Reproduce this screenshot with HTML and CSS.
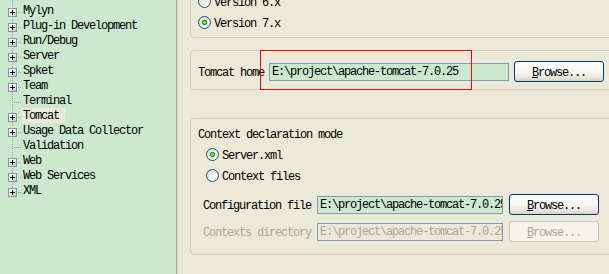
FILE: index.html
```html
<!DOCTYPE html>
<html lang="en">
<head>
    <meta charset="UTF-8">
    <title>Preferences - Tomcat</title>
    <link rel="stylesheet" href="styles.css">
</head>
<body>
    <div class="window">
        <!-- arvore de preferencias -->
        <div class="tree-pane">
            <ul class="tree">
                <li><span class="exp"></span><span class="label">Mylyn</span></li>
                <li><span class="exp"></span><span class="label">Plug-in Development</span></li>
                <li><span class="exp"></span><span class="label">Run/Debug</span></li>
                <li><span class="exp"></span><span class="label">Server</span></li>
                <li><span class="exp"></span><span class="label">Spket</span></li>
                <li><span class="exp"></span><span class="label">Team</span></li>
                <li><span class="exp none"></span><span class="label">Terminal</span></li>
                <li><span class="exp"></span><span class="label selected">Tomcat</span></li>
                <li><span class="exp"></span><span class="label">Usage Data Collector</span></li>
                <li><span class="exp none"></span><span class="label">Validation</span></li>
                <li><span class="exp"></span><span class="label">Web</span></li>
                <li><span class="exp"></span><span class="label">Web Services</span></li>
                <li><span class="exp"></span><span class="label">XML</span></li>
            </ul>
        </div>

        <!-- pagina Tomcat -->
        <div class="prefs">
            <div class="group group-version">
                <div class="radio-row"><span class="radio"></span><span class="caption">Version 6.x</span></div>
                <div class="radio-row"><span class="radio checked"></span><span class="caption">Version 7.x</span></div>
            </div>

            <div class="group group-home">
                <div class="field-row">
                    <span class="field-label home-label">Tomcat home</span>
                    <span class="text-input home-input">E:\project\apache-tomcat-7.0.25</span>
                    <span class="button home-button"><u>B</u>rowse...</span>
                </div>
            </div>

            <div class="group group-context">
                <div class="group-title">Context declaration mode</div>
                <div class="radio-row indent"><span class="radio checked"></span><span class="caption">Server.xml</span></div>
                <div class="radio-row indent"><span class="radio"></span><span class="caption">Context files</span></div>

                <div class="field-row config-row">
                    <span class="field-label ctx-label">Configuration file</span>
                    <span class="text-input ctx-input">E:\project\apache-tomcat-7.0.25</span>
                    <span class="button ctx-button"><u>B</u>rowse...</span>
                </div>
                <div class="field-row dir-row disabled">
                    <span class="field-label ctx-label">Contexts directory</span>
                    <span class="text-input ctx-input">E:\project\apache-tomcat-7.0.25</span>
                    <span class="button ctx-button"><u>B</u>rowse...</span>
                </div>
            </div>
        </div>

        <div class="annotation"></div>
    </div>
</body>
</html>
```

FILE: styles.css
```css
body {
    margin: 0;
    font-family: "Liberation Mono", "Courier New", monospace;
    font-size: 12px;
    letter-spacing: -1.2px;
    color: #000;
    background-color: #ece9d8;
}

.window {
    position: relative;
    display: flex;
    height: 274px;
    overflow: hidden;
}

/* arvore */
.tree-pane {
    width: 176px;
    flex: none;
    background-color: #cce8cf;
    border-right: 1px solid #a7a69a;
    box-shadow: 1px 0 0 #d8d5c4;
}

.tree {
    list-style: none;
    margin: 0;
    padding: 3px 0 0;
    background: repeating-linear-gradient(to bottom, #a0a0a0 0 1px, transparent 1px 2px) 12px 0 / 1px 192px no-repeat;
}

.tree li {
    display: flex;
    height: 15px;
    line-height: 17px;
    padding-left: 8px;
    background: repeating-linear-gradient(to right, #a0a0a0 0 1px, transparent 1px 2px) 14px 9px / 8px 1px no-repeat;
}

.exp {
    flex: none;
    width: 9px;
    height: 9px;
    box-sizing: border-box;
    margin: 5px 6px 0 0;
    border: 1px solid #7a96b0;
    background:
        linear-gradient(#000, #000) center / 5px 1px no-repeat,
        linear-gradient(#000, #000) center / 1px 5px no-repeat,
        linear-gradient(135deg, #fff 0%, #f1efe6 50%, #c6c2b1 100%);
}

.exp.none {
    visibility: hidden;
}

.label {
    height: 15px;
}

.label.selected {
    background-color: #ece9d8;
    margin-left: -1px;
    padding: 0 6px 0 1px;
}

/* pagina da direita */
.prefs {
    flex: 1;
    display: flex;
    flex-direction: column;
    padding-left: 13px;
    overflow: hidden;
}

.group {
    border: 1px solid #d0d0bf;
    border-radius: 4px;
    margin-right: -12px;
}

.group-version {
    margin-top: -20px;
    padding: 10px 0 4px 7px;
}

.group-home {
    margin-top: 12px;
    padding: 10px 0 7px 7px;
}

.group-context {
    margin-top: 28px;
    padding: 7px 0 12px 7px;
}

.group-title {
    line-height: 15px;
    padding-top: 2px;
    margin-bottom: 1px;
}

.radio-row {
    display: flex;
    align-items: center;
    gap: 3px;
    height: 21px;
}

.radio-row.indent {
    padding-left: 8px;
}

.caption {
    padding-top: 2px;
}

.radio {
    flex: none;
    width: 13px;
    height: 13px;
    box-sizing: border-box;
    border-radius: 50%;
    border: 1px solid #1c5180;
    background: linear-gradient(135deg, #d8d5c4, #fff 80%);
}

.radio.checked {
    background:
        radial-gradient(circle, #6fdc6f 0 1px, #21a121 2px, #2ea82e 2.5px, transparent 3px),
        linear-gradient(135deg, #d8d5c4, #fff 80%);
}

.field-row {
    display: flex;
    align-items: center;
    height: 21px;
}

.field-label {
    flex: none;
    white-space: pre;
    padding-top: 2px;
}

.home-label {
    width: 71px;
}

.ctx-label {
    width: 114px;
    padding-left: 5px;
}

.config-row {
    margin-top: 8px;
}

.dir-row {
    margin-top: 6px;
}

.text-input {
    flex: none;
    height: 18px;
    box-sizing: border-box;
    line-height: 17px;
    padding: 0 2px;
    border: 1px solid #7f9db9;
    background-color: #cce8cf;
    white-space: nowrap;
    overflow: hidden;
}

.home-input {
    width: 240px;
}

.ctx-input {
    width: 186px;
}

.button {
    flex: none;
    display: flex;
    align-items: center;
    justify-content: center;
    width: 90px;
    height: 21px;
    box-sizing: border-box;
    padding-top: 2px;
    border: 1px solid #003c74;
    border-radius: 3px;
    background: linear-gradient(#fff, #f6f5f0 55%, #e6e3d8 85%, #d6d0c5);
}

.home-button {
    margin-left: 5px;
}

.ctx-button {
    margin-left: 6px;
}

.disabled {
    color: #aca899;
}

.disabled .text-input {
    background-color: #ece9d8;
}

.disabled .button {
    border-color: #c9c7ba;
    background: #f5f4ea;
}

/* retangulo vermelho de destaque */
.annotation {
    position: absolute;
    left: 260px;
    top: 50px;
    width: 212px;
    height: 40px;
    box-sizing: border-box;
    border: 1px solid #f00;
}
```
